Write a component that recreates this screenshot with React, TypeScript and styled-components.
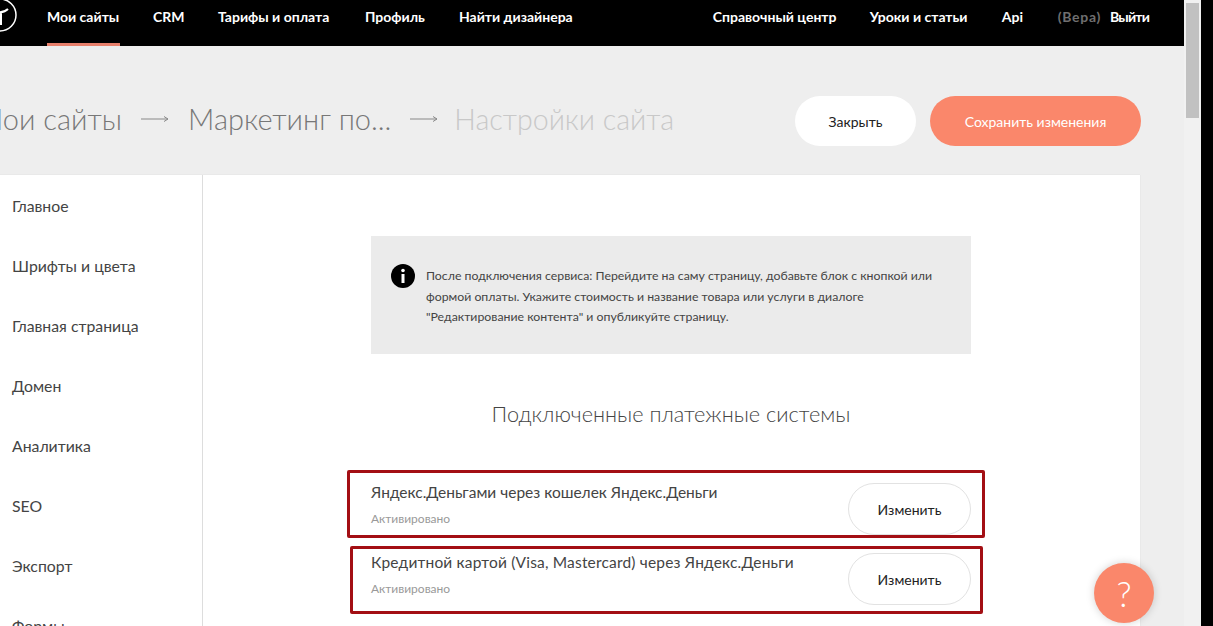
import styled, { createGlobalStyle } from "styled-components";

const GlobalStyle = createGlobalStyle`
    html, body {
        margin: 0;
        padding: 0;
        background: #000;
    }
    * {
        box-sizing: border-box;
    }
    body {
        font-family: "Lato", "Noto Sans", sans-serif;
    }
`;

const Screen = styled.div`
    display: flex;
    width: 1213px;
    height: 626px;
    overflow: hidden;
    background: #000;
`;

const Main = styled.div`
    position: relative;
    width: 1184px;
    height: 626px;
    overflow: hidden;
    background: #eeeeee;
`;

const ScrollTrack = styled.div`
    width: 17px;
    height: 626px;
    padding: 3px 2px;
    background: #f1f1f1;
`;

const ScrollThumb = styled.div`
    height: 115px;
    background: #c1c1c1;
`;

const TopBar = styled.nav`
    display: flex;
    justify-content: space-between;
    height: 46px;
    padding-right: 35px;
    background: #000;
`;

const NavGroup = styled.div`
    display: flex;
    gap: 33px;
`;

const Logo = styled.svg`
    flex: none;
    width: 34px;
    height: 34px;
    margin: -2px -3px 0 -17px;
`;

const NavLink = styled.a<{ $active?: boolean; $width: number }>`
    width: ${props => props.$width}px;
    height: 46px;
    padding-top: 8px;
    border-bottom: 3px solid ${props => (props.$active ? "#e8806c" : "transparent")};
    color: #fff;
    font-size: 14px;
    line-height: 18px;
    font-weight: 700;
    white-space: nowrap;
`;

const UserBlock = styled.div`
    display: flex;
    gap: 9px;
    padding-top: 8px;
    font-size: 14px;
    line-height: 18px;
    font-weight: 700;
    color: #fff;
`;

const UserName = styled.span`
    color: #6f6f6f;
    letter-spacing: 0.7px;
`;

const Logout = styled.span`
    letter-spacing: -0.8px;
`;

const HeadRow = styled.div`
    display: flex;
    align-items: center;
    height: 129px;
    padding: 21px 43px 0 0;
`;

const Crumbs = styled.div`
    display: flex;
    flex: 1;
    align-items: center;
    gap: 19px;
    margin: -4px 0 0 -23px;
`;

const Crumb = styled.span<{ $current?: boolean }>`
    margin-left: ${props => (props.$current ? "-3px" : "0")};
    color: ${props => (props.$current ? "#c8c8c8" : "#777")};
    font-size: ${props => (props.$current ? "28.6px" : "29px")};
    font-weight: 300;
    line-height: 34px;
    white-space: nowrap;
`;

const CrumbArrow = styled.svg`
    flex: none;
    width: 28px;
    height: 10px;
`;

const HeadButtons = styled.div`
    display: flex;
    gap: 14px;
`;

const PillButton = styled.button<{ $primary?: boolean; $width: number }>`
    width: ${props => props.$width}px;
    height: 50px;
    padding: 0;
    border: 0;
    border-radius: 25px;
    background: ${props => (props.$primary ? "#fa876b" : "#fff")};
    color: ${props => (props.$primary ? "#fff" : "#222")};
    font-family: inherit;
    font-size: 14px;
`;

const Card = styled.div`
    display: flex;
    width: 1140px;
    height: 451px;
    background: #fff;
    box-shadow: 0 0 1px rgba(0, 0, 0, 0.12);
`;

const SideMenu = styled.ul`
    flex: none;
    width: 203px;
    margin: 0;
    padding: 1px 0 0 12px;
    list-style: none;
    border-right: 1px solid #ddd;
`;

const SideItem = styled.li`
    height: 60px;
    color: #444;
    font-size: 15.8px;
    line-height: 60px;
`;

const Content = styled.div`
    display: flex;
    flex: 1;
    flex-direction: column;
    align-items: center;
    padding: 61px 1px 0 0;
`;

const Column = styled.div`
    width: 600px;
`;

const InfoBox = styled.div`
    display: flex;
    gap: 11px;
    height: 118px;
    padding: 28px 20px 0;
    background: #ebebeb;
`;

const InfoIcon = styled.svg`
    flex: none;
    width: 24px;
    height: 24px;
`;

const InfoText = styled.p`
    margin: 2px 0 0;
    color: #444;
    font-size: 12.3px;
    line-height: 20.5px;
`;

const SectionTitle = styled.h2`
    margin: 45px 0 54px;
    color: #444;
    font-size: 21.7px;
    line-height: 30px;
    font-weight: 300;
    text-align: center;
`;

const PayRow = styled.div`
    position: relative;
    display: flex;
    justify-content: space-between;
    height: 52px;
    margin-bottom: 18px;
`;

const PayInfo = styled.div`
    display: flex;
    flex-direction: column;
    gap: 9px;
`;

const PayTitle = styled.div<{ $spacing?: number }>`
    margin-top: -1px;
    color: #444;
    font-size: 15.5px;
    line-height: 20px;
    letter-spacing: ${props => props.$spacing ?? 0}px;
`;

const PayStatus = styled.div`
    color: #999;
    font-size: 12px;
    line-height: 16px;
`;

const EditButton = styled.button`
    width: 123px;
    height: 52px;
    padding: 0;
    border: 1px solid #e2e2e2;
    border-radius: 26px;
    background: #fff;
    color: #222;
    font-family: inherit;
    font-size: 14px;
`;

const Annotation = styled.div<{ $inset: string }>`
    position: absolute;
    inset: ${props => props.$inset};
    border: 3px solid #a30f14;
    border-radius: 2px;
    pointer-events: none;
`;

const HelpButton = styled.div`
    position: absolute;
    left: 1094px;
    top: 563px;
    display: flex;
    align-items: center;
    justify-content: center;
    width: 60px;
    height: 60px;
    border-radius: 50%;
    background: #fa876b;
    box-shadow: 0 0 8px rgba(0, 0, 0, 0.18);
    color: #fff;
    font-size: 35px;
    font-weight: 300;
`;

const Arrow = () => (
    <CrumbArrow viewBox="0 0 28 10">
        <path d="M0 5H27M23 2.5L27 5L23 7.5" fill="none" stroke="#888" strokeWidth="1" />
    </CrumbArrow>
);

const mainLinks = [
    { label: "Мои сайты", width: 73, active: true },
    { label: "CRM", width: 32 },
    { label: "Тарифы и оплата", width: 114 },
    { label: "Профиль", width: 61 },
    { label: "Найти дизайнера", width: 117 },
];

const helpLinks = [
    { label: "Справочный центр", width: 124 },
    { label: "Уроки и статьи", width: 99 },
    { label: "Api", width: 23 },
];

const sections = ["Главное", "Шрифты и цвета", "Главная страница", "Домен", "Аналитика", "SEO", "Экспорт", "Формы"];

const App = () => {
    return (
        <Screen>
            <GlobalStyle />
            <Main>
                <TopBar>
                    <NavGroup>
                        <Logo viewBox="0 0 34 34">
                            <circle cx="17" cy="17" r="16" fill="none" stroke="#fff" strokeWidth="1.5" />
                            <path d="M9 13C13 15 21 15 25 11M18 14V27" fill="none" stroke="#fff" strokeWidth="2" />
                        </Logo>
                        {mainLinks.map(link => (
                            <NavLink key={link.label} $active={link.active} $width={link.width}>
                                {link.label}
                            </NavLink>
                        ))}
                    </NavGroup>
                    <NavGroup>
                        {helpLinks.map(link => (
                            <NavLink key={link.label} $width={link.width}>
                                {link.label}
                            </NavLink>
                        ))}
                        <UserBlock>
                            <UserName>(Вера)</UserName>
                            <Logout>Выйти</Logout>
                        </UserBlock>
                    </NavGroup>
                </TopBar>
                <HeadRow>
                    <Crumbs>
                        <Crumb>Мои сайты</Crumb>
                        <Arrow />
                        <Crumb>Маркетинг по...</Crumb>
                        <Arrow />
                        <Crumb $current>Настройки сайта</Crumb>
                    </Crumbs>
                    <HeadButtons>
                        <PillButton $width={121}>Закрыть</PillButton>
                        <PillButton $primary $width={211}>Сохранить изменения</PillButton>
                    </HeadButtons>
                </HeadRow>
                <Card>
                    <SideMenu>
                        {sections.map(item => (
                            <SideItem key={item}>{item}</SideItem>
                        ))}
                    </SideMenu>
                    <Content>
                        <Column>
                            <InfoBox>
                                <InfoIcon viewBox="0 0 24 24">
                                    <circle cx="12" cy="12" r="12" fill="#000" />
                                    <rect x="10.5" y="10" width="3" height="9" fill="#fff" />
                                    <circle cx="12" cy="6.5" r="1.8" fill="#fff" />
                                </InfoIcon>
                                <InfoText>
                                    После подключения сервиса: Перейдите на саму страницу, добавьте блок с кнопкой или
                                    формой оплаты. Укажите стоимость и название товара или услуги в диалоге
                                    "Редактирование контента" и опубликуйте страницу.
                                </InfoText>
                            </InfoBox>
                            <SectionTitle>Подключенные платежные системы</SectionTitle>
                            <PayRow>
                                <PayInfo>
                                    <PayTitle>Яндекс.Деньгами через кошелек Яндекс.Деньги</PayTitle>
                                    <PayStatus>Активировано</PayStatus>
                                </PayInfo>
                                <EditButton>Изменить</EditButton>
                                <Annotation $inset="-13px -14px -3px -24px" />
                            </PayRow>
                            <PayRow>
                                <PayInfo>
                                    <PayTitle $spacing={0.18}>Кредитной картой (Visa, Mastercard) через Яндекс.Деньги</PayTitle>
                                    <PayStatus>Активировано</PayStatus>
                                </PayInfo>
                                <EditButton>Изменить</EditButton>
                                <Annotation $inset="-7px -12px -9px -21px" />
                            </PayRow>
                        </Column>
                    </Content>
                </Card>
                <HelpButton>?</HelpButton>
            </Main>
            <ScrollTrack>
                <ScrollThumb />
            </ScrollTrack>
        </Screen>
    );
};

export default App;
